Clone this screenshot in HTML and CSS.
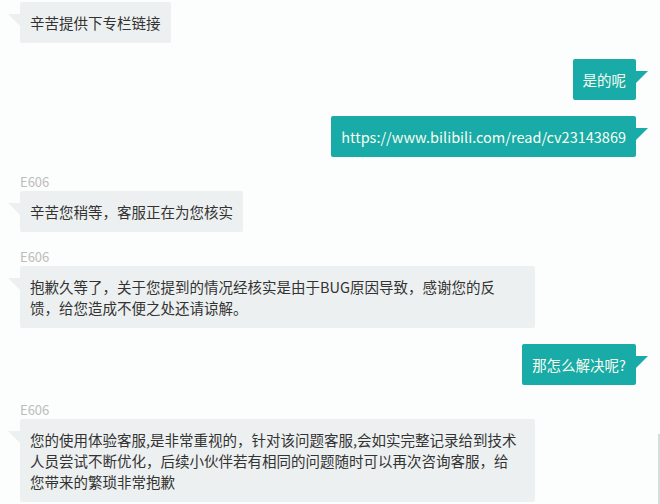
FILE: index.html
```html
<!DOCTYPE html>
<html lang="zh-CN">
<head>
    <meta charset="UTF-8">
    <meta name="viewport" content="width=device-width, initial-scale=1.0">
    <title>客服对话</title>
    <link rel="stylesheet" href="styles.css">
</head>
<body>

    <div class="chat">
        <div class="msg left">
            <div class="bubble">辛苦提供下专栏链接</div>
        </div>

        <div class="msg right">
            <div class="bubble">是的呢</div>
        </div>

        <div class="msg right">
            <div class="bubble">https://www.bilibili.com/read/cv23143869</div>
        </div>

        <div class="msg left">
            <div class="name">E606</div>
            <div class="bubble">辛苦您稍等，客服正在为您核实</div>
        </div>

        <div class="msg left">
            <div class="name">E606</div>
            <div class="bubble long">抱歉久等了，关于您提到的情况经核实是由于BUG原因导致，感谢您的反<br>馈，给您造成不便之处还请谅解。</div>
        </div>

        <div class="msg right">
            <div class="bubble">那怎么解决呢?</div>
        </div>

        <div class="msg left">
            <div class="name">E606</div>
            <div class="bubble long">您的使用体验客服,是非常重视的，针对该问题客服,会如实完整记录给到技术<br>人员尝试不断优化，后续小伙伴若有相同的问题随时可以再次咨询客服，给<br>您带来的繁琐非常抱歉</div>
        </div>
    </div>

    <div class="scroll-thumb"></div>

</body>
</html>
```

FILE: styles.css
```css
body {
    margin: 0;
    padding: 0;
    background: #fcfdfd;
    font-family: "Noto Sans CJK SC", "Noto Sans", sans-serif;
    font-size: 14.5px;
    color: #333;
    overflow: hidden;
}

.chat {
    display: flex;
    flex-direction: column;
    gap: 16px;
    padding: 2px 24px 0 20px;
}

.msg {
    display: flex;
    flex-direction: column;
}

.msg.left {
    align-items: flex-start;
}

.msg.right {
    align-items: flex-end;
}

.name {
    font-size: 13px;
    line-height: 18px;
    color: #bcbcbc;
}

.bubble {
    position: relative;
    padding: 10px;
    line-height: 21px;
    border-radius: 2px;
    max-width: 515px;
    box-sizing: border-box;
}

.bubble.long {
    width: 515px;
}

.left .bubble {
    background: #edf0f0;
    color: #333;
}

.right .bubble {
    background: #19aba8;
    color: #f8fdf0;
}

.left .bubble::before,
.right .bubble::before {
    content: "";
    position: absolute;
    top: 12px;
    width: 0;
    height: 0;
}

.left .bubble::before {
    left: -12px;
    border-top: 12px solid #edf0f0;
    border-left: 12px solid transparent;
}

.right .bubble::before {
    right: -12px;
    border-top: 12px solid #19aba8;
    border-right: 12px solid transparent;
}

.scroll-thumb {
    position: fixed;
    right: 0;
    top: 434px;
    bottom: 0;
    width: 2px;
    background: #d6dddd;
}
```
